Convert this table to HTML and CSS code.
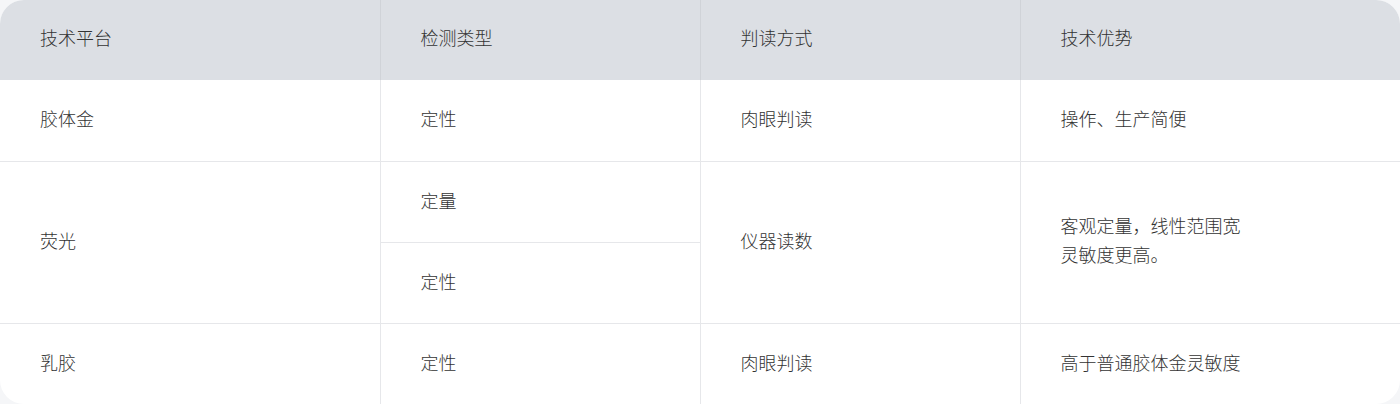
FILE: index.html
```html
<!DOCTYPE html>
<html lang="zh-CN">
<head>
<meta charset="utf-8">
<link rel="stylesheet" href="styles.css">
</head>
<body>
<div class="wrap">
<table class="spec">
  <colgroup>
    <col class="c1"><col class="c2"><col class="c3"><col class="c4">
  </colgroup>
  <thead>
    <tr><th>技术平台</th><th>检测类型</th><th>判读方式</th><th>技术优势</th></tr>
  </thead>
  <tbody>
    <tr><td>胶体金</td><td>定性</td><td>肉眼判读</td><td>操作、生产简便</td></tr>
    <tr><td rowspan="2">荧光</td><td>定量</td><td rowspan="2">仪器读数</td><td rowspan="2" class="multi">客观定量，线性范围宽<br>灵敏度更高。</td></tr>
    <tr><td class="inner">定性</td></tr>
    <tr class="last"><td>乳胶</td><td>定性</td><td>肉眼判读</td><td>高于普通胶体金灵敏度</td></tr>
  </tbody>
</table>
</div>
</body>
</html>
```

FILE: styles.css
```css
html, body {
  margin: 0;
  padding: 0;
  background: #f5f6f8;
}
.wrap {
  width: 1400px;
  height: 404px;
  border-radius: 24px;
  overflow: hidden;
  background: #ffffff;
}
.spec {
  width: 1400px;
  border-collapse: collapse;
  table-layout: fixed;
  font-family: "Noto Sans CJK SC", "Noto Sans", sans-serif;
  font-size: 18px;
  font-weight: 300;
  line-height: 26px;
  color: #333333;
}
.c1 { width: 380px; }
.c2 { width: 320px; }
.c3 { width: 320px; }
.c4 { width: 380px; }
.spec th {
  height: 80px;
  padding: 0 0 6px 40px;
  box-sizing: border-box;
  background: #dcdfe4;
  font-weight: 300;
  text-align: left;
  border-left: 1px solid #d0d3d8;
}
.spec th:first-child { border-left: none; }
.spec td {
  height: 81px;
  box-sizing: border-box;
  padding: 0 0 4px 40px;
  text-align: left;
  vertical-align: middle;
  border-left: 1px solid #e6e7ea;
  border-bottom: 1px solid #e6e7ea;
}
.spec tbody tr td:first-child { border-left: none; }
.spec tbody tr td.inner { border-left: 1px solid #e6e7ea; }
.spec .last td { border-bottom: none; }
.spec td.multi { line-height: 29px; }
```
